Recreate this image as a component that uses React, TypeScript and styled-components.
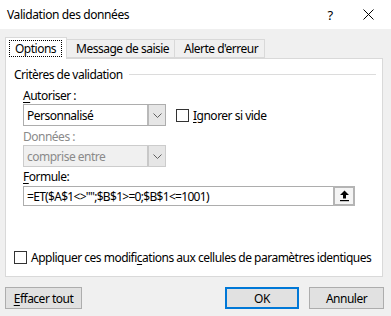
import React from "react";
import styled, { createGlobalStyle } from "styled-components";

const Global = createGlobalStyle`
  html, body { margin: 0; padding: 0; }
  body {
    width: 391px; height: 316px; overflow: hidden;
    background: #f0f0f0;
    font-family: "Noto Sans", "Open Sans", sans-serif;
    font-size: 12px;
    letter-spacing: -0.5px;
    white-space: nowrap;
    color: #000;
  }
`;

const Dialog = styled.div`
  width: 391px;
  height: 316px;
  display: flex;
  flex-direction: column;
  background: #f0f0f0;
`;

const TitleBar = styled.div`
  height: 29px;
  background: #fff;
  display: flex;
  align-items: center;
  padding-left: 7px;
`;

const Title = styled.div`
  flex: 1;
  font-size: 12px;
  letter-spacing: -0.4px;
`;

const TitleBtn = styled.div<{ $w: number }>`
  width: ${(p) => p.$w}px;
  display: flex;
  align-items: center;
  justify-content: center;
  height: 29px;
  font-size: 13px;
  color: #000;
`;

const Tabs = styled.div`
  display: flex;
  align-items: flex-end;
  padding-left: 5px;
  margin-top: 8px;
  position: relative;
  z-index: 1;
`;

const Tab = styled.div<{ $w: number; $active?: boolean }>`
  width: ${(p) => p.$w}px;
  flex: none;
  height: 19px;
  box-sizing: border-box;
  border: 1px solid #d9d9d9;
  margin-left: ${(p) => (p.$active ? 0 : -1)}px;
  background: ${(p) => (p.$active ? "#fff" : "#f0f0f0")};
  display: flex;
  align-items: center;
  padding-left: ${(p) => (p.$active ? 3 : 9)}px;
  ${(p) =>
    p.$active
      ? "height: 22px; border-bottom: none; margin-bottom: -1px;"
      : ""}
`;

const Focus = styled.span`
  border: 1px dotted #000;
  padding: 0 5px;
  line-height: 15px;
`;

const Panel = styled.div`
  margin-left: 5px;
  width: 378px;
  height: 219px;
  box-sizing: border-box;
  border: 1px solid #d9d9d9;
  background: #fff;
  display: flex;
  flex-direction: column;
  padding: 7px 6px 0 8px;
`;

const GroupHeader = styled.div`
  height: 16px;
  display: flex;
  align-items: center;
  gap: 6px;
`;

const GroupLine = styled.div`
  flex: 1;
  height: 1px;
  background: #dcdcdc;
`;

const Body = styled.div`
  padding-left: 9px;
  display: flex;
  flex-direction: column;
`;

const Label = styled.div<{ $disabled?: boolean; $top: number }>`
  height: 16px;
  line-height: 16px;
  margin-top: ${(p) => p.$top}px;
  color: ${(p) => (p.$disabled ? "#8a8a8a" : "#000")};
`;

const Row = styled.div<{ $gap?: number; $bottom?: number }>`
  display: flex;
  align-items: center;
  margin-left: ${(p) => p.$gap ?? 0}px;
  margin-bottom: ${(p) => p.$bottom ?? 0}px;
`;

const Select = styled.div<{ $disabled?: boolean }>`
  width: 143px;
  height: 22px;
  box-sizing: border-box;
  border: 1px solid ${(p) => (p.$disabled ? "#cccccc" : "#adadad")};
  background: ${(p) => (p.$disabled ? "#f0f0f0" : "#fff")};
  color: ${(p) => (p.$disabled ? "#8a8a8a" : "#000")};
  display: flex;
  align-items: center;
  padding-left: 3px;
`;

const SelectText = styled.div`
  flex: 1;
`;

const ArrowBox = styled.div<{ $disabled?: boolean }>`
  width: 18px;
  height: 20px;
  box-sizing: border-box;
  border-left: 2px solid ${(p) => (p.$disabled ? "#c8c8c8" : "#b9b9b9")};
  background: #e6e6e6;
  display: flex;
  align-items: center;
  justify-content: center;
`;

const Check = styled.div`
  width: 13px;
  height: 13px;
  box-sizing: border-box;
  border: 1px solid #333;
  background: #fff;
  flex: none;
`;

const CheckLabel = styled.div`
  margin-left: 4px;
`;

const Formula = styled.div`
  display: flex;
  height: 20px;
  margin-top: 1px;
`;

const Input = styled.div`
  width: 310px;
  height: 20px;
  box-sizing: border-box;
  border: 1px solid #adadad;
  border-right: none;
  padding-left: 3px;
  display: flex;
  align-items: center;
  letter-spacing: -0.7px;
`;

const RefBtn = styled.div`
  width: 22px;
  height: 20px;
  box-sizing: border-box;
  border: 2px solid #b4b4b4;
  background: #f4f4f4;
  display: flex;
  align-items: center;
  justify-content: center;
`;

const Spacer = styled.div`
  flex: 1;
`;

const Footer = styled.div`
  display: flex;
  align-items: center;
  padding: 10px 7px 0 5px;
`;

const Button = styled.div<{ $w: number; $default?: boolean; $gap?: number }>`
  width: ${(p) => p.$w}px;
  height: 22px;
  box-sizing: border-box;
  margin-left: ${(p) => p.$gap ?? 0}px;
  border: ${(p) => (p.$default ? "2px solid #0078d7" : "1px solid #adadad")};
  background: #e1e1e1;
  display: flex;
  align-items: center;
  justify-content: center;
`;

const U = styled.span`
  text-decoration: underline;
  text-underline-offset: 2px;
`;

const Chevron = () => (
  <svg width="9" height="5" viewBox="0 0 9 5">
    <path d="M0.5 0.5 L4.5 4.5 L8.5 0.5" fill="none" stroke="#606060" strokeWidth="1" />
  </svg>
);

export default function App() {
  return (
    <>
      <Global />
      <Dialog>
        <TitleBar>
          <Title>Validation des données</Title>
          <TitleBtn $w={30}>?</TitleBtn>
          <TitleBtn $w={46}>
            <svg width="11" height="11" viewBox="0 0 11 11">
              <path d="M0.5 0.5 L10.5 10.5 M10.5 0.5 L0.5 10.5" stroke="#000" strokeWidth="1" />
            </svg>
          </TitleBtn>
        </TitleBar>
        <Tabs>
          <Tab $w={62} $active>
            <Focus>Options</Focus>
          </Tab>
          <Tab $w={109}>Message de saisie</Tab>
          <Tab $w={91}>Alerte d'erreur</Tab>
        </Tabs>
        <Panel>
          <GroupHeader>
            <span>Critères de validation</span>
            <GroupLine />
          </GroupHeader>
          <Body>
            <Label $top={6}>
              <U>A</U>utoriser :
            </Label>
            <Row>
              <Select>
                <SelectText>Personnalisé</SelectText>
                <ArrowBox>
                  <Chevron />
                </ArrowBox>
              </Select>
              <Row $gap={10}>
                <Check />
                <CheckLabel>
                  <U>I</U>gnorer si vide
                </CheckLabel>
              </Row>
            </Row>
            <Label $top={3} $disabled>
              Données :
            </Label>
            <Row>
              <Select $disabled>
                <SelectText>comprise entre</SelectText>
                <ArrowBox $disabled>
                  <Chevron />
                </ArrowBox>
              </Select>
            </Row>
            <Label $top={2}>
              <U>F</U>ormule:
            </Label>
            <Formula>
              <Input>=ET($A$1&lt;&gt;"";$B$1&gt;=0;$B$1&lt;=1001)</Input>
              <RefBtn>
                <svg width="11" height="12" viewBox="0 0 11 12">
                  <path d="M5.5 0.5 L10 5 L7 5 L7 8.5 L4 8.5 L4 5 L1 5 Z" fill="#000" />
                  <rect x="1" y="10" width="9" height="1.2" fill="#000" />
                </svg>
              </RefBtn>
            </Formula>
          </Body>
          <Spacer />
          <Row $bottom={10}>
            <Check />
            <CheckLabel>
              Appliquer ces modifi<U>c</U>ations aux cellules de paramètres identiques
            </CheckLabel>
          </Row>
        </Panel>
        <Footer>
          <Button $w={77}>
            <span>
              <U>E</U>ffacer tout
            </span>
          </Button>
          <Spacer />
          <Button $w={74} $default>
            OK
          </Button>
          <Button $w={75} $gap={10}>
            Annuler
          </Button>
        </Footer>
      </Dialog>
    </>
  );
}
